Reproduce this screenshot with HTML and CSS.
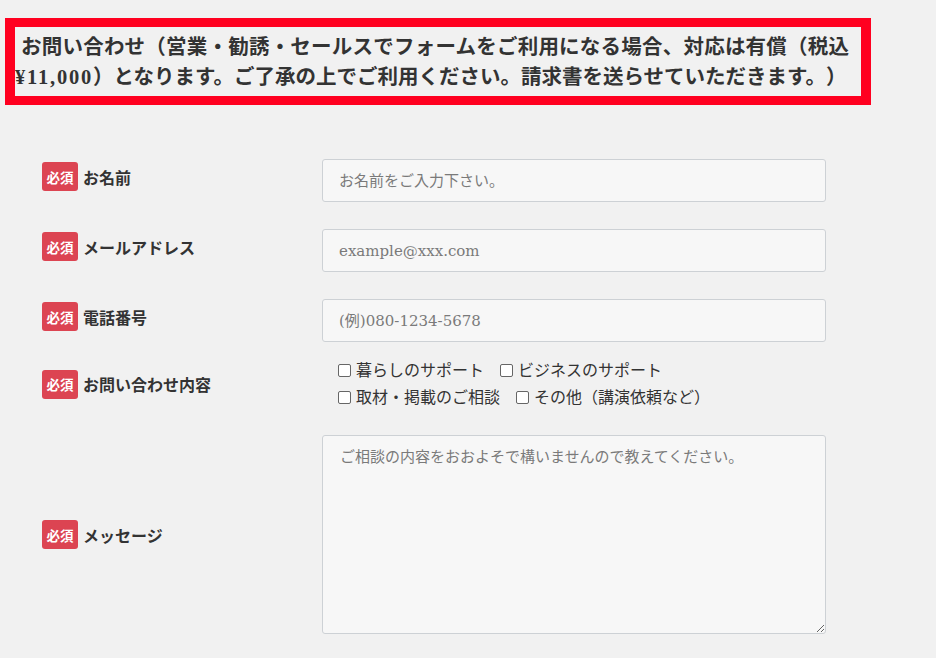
FILE: index.html
```html
<!DOCTYPE html>
<html lang="ja">
<head>
<meta charset="utf-8">
<title>お問い合わせ</title>
<link rel="stylesheet" href="styles.css">
</head>
<body>
<div class="notice">お問い合わせ（営業・勧誘・セールスでフォームをご利用になる場合、対応は有償（税込<span class="price">¥11,000</span>）となります。ご了承の上でご利用ください。請求書を送らせていただきます。）</div>

<form class="form">
  <div class="row row-input">
    <div class="label"><span class="req">必須</span><span class="name">お名前</span></div>
    <div class="field"><input class="input" type="text" placeholder="お名前をご入力下さい。"></div>
  </div>
  <div class="row row-input">
    <div class="label"><span class="req">必須</span><span class="name">メールアドレス</span></div>
    <div class="field"><input class="input" type="email" placeholder="example@xxx.com"></div>
  </div>
  <div class="row row-input">
    <div class="label"><span class="req">必須</span><span class="name">電話番号</span></div>
    <div class="field"><input class="input" type="tel" placeholder="(例)080-1234-5678"></div>
  </div>
  <div class="row row-check">
    <div class="label"><span class="req">必須</span><span class="name">お問い合わせ内容</span></div>
    <div class="field checks">
      <label class="check"><input type="checkbox"><span>暮らしのサポート</span></label>
      <label class="check"><input type="checkbox"><span>ビジネスのサポート</span></label>
      <label class="check"><input type="checkbox"><span>取材・掲載のご相談</span></label>
      <label class="check"><input type="checkbox"><span>その他（講演依頼など）</span></label>
    </div>
  </div>
  <div class="row row-message">
    <div class="label"><span class="req">必須</span><span class="name">メッセージ</span></div>
    <div class="field"><textarea class="textarea" placeholder="ご相談の内容をおおよそで構いませんので教えてください。"></textarea></div>
  </div>
</form>
</body>
</html>
```

FILE: styles.css
```css
html, body {
  margin: 0;
  padding: 0;
}

body {
  background: #f1f1f1;
  color: #333;
  font-family: "Liberation Serif", "Noto Sans CJK JP", serif;
  width: 936px;
  height: 658px;
  overflow: hidden;
}

.notice {
  margin: 18px 0 0 5px;
  width: 834px;
  border-style: solid;
  border-color: #ff0020;
  border-width: 9px 10px;
  padding: 5px 12px 4px 0;
  font-weight: 700;
  font-size: 20.5px;
  line-height: 30px;
  text-indent: 6px;
  text-align: justify;
  text-spacing-trim: space-all;
  color: #333;
}

.price {
  letter-spacing: 1.8px;
}

.form {
  margin: 54px 0 0 42px;
  width: 784px;
}

.row {
  display: flex;
  align-items: center;
}

.row + .row {
  margin-top: 27px;
}

.row.row-check {
  margin-top: 15px;
}

.row.row-message {
  margin-top: 24px;
}

.label {
  flex: 0 0 280px;
  display: flex;
  align-items: center;
  gap: 5px;
}

.row-input .label {
  margin-bottom: 8px;
}

.req {
  width: 36px;
  height: 29px;
  display: flex;
  align-items: center;
  justify-content: center;
  background: #dc4452;
  color: #fff;
  font-size: 13.5px;
  font-weight: 700;
  border-radius: 3px;
}

.name {
  font-size: 16px;
  font-weight: 700;
  color: #333;
}

.field {
  width: 504px;
}

.input,
.textarea {
  display: block;
  width: 100%;
  box-sizing: border-box;
  border: 1px solid #cdd1d5;
  border-radius: 3px;
  background: #f7f7f7;
  font-family: "DejaVu Serif", "Noto Sans CJK JP", serif;
  font-size: 15px;
  color: #333;
  outline: none;
  margin: 0;
}

.input {
  height: 43px;
  padding: 0 16px;
}

.textarea {
  height: 199px;
  padding: 10px 17px;
  line-height: 22px;
}

.input::placeholder,
.textarea::placeholder {
  color: #7a7a7a;
  opacity: 1;
}

.checks {
  box-sizing: border-box;
  padding-left: 16px;
  display: flex;
  flex-wrap: wrap;
  column-gap: 16px;
  font-size: 16px;
  color: #333;
}

.check {
  display: flex;
  align-items: center;
  height: 27px;
  line-height: 27px;
}

.check input {
  appearance: none;
  -webkit-appearance: none;
  width: 13px;
  height: 13px;
  margin: 0 5px 0 0;
  border: 1px solid #666;
  border-radius: 2px;
  background: #fff;
  box-sizing: border-box;
}
```
